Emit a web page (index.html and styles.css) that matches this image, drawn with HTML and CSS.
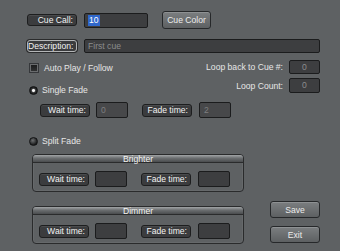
FILE: index.html
```html
<!DOCTYPE html>
<html lang="en">
    <head>
        <title>Cue Editor</title>
        <meta charset="utf-8">
        <meta name="viewport" content="width=device-width, initial-scale=1.0">
        <link rel="stylesheet" href="styles.css">
    </head>
    <body>
        <main id="cue-editor">
            <div class="row row-top">
                <div class="tag">Cue Call:</div>
                <div class="field field-call"><span class="selected">10</span></div>
                <button class="btn btn-color">Cue Color</button>
            </div>
            <div class="row row-desc">
                <div class="tag tag-focus">Description:</div>
                <div class="field field-desc">First cue</div>
            </div>
            <div class="options">
                <div class="options-left">
                    <div class="check-row"><span class="checkbox"></span>Auto Play / Follow</div>
                    <div class="radio-row"><span class="radio checked"></span>Single Fade</div>
                </div>
                <div class="options-right">
                    <div class="loop-row">Loop back to Cue #:<div class="field field-small">0</div></div>
                    <div class="loop-row loop-count">Loop Count:<div class="field field-small">0</div></div>
                </div>
            </div>
            <div class="times times-single">
                <div class="tag">Wait time:</div>
                <div class="field field-time disabled">0</div>
                <div class="tag tag-fade">Fade time:</div>
                <div class="field field-time disabled">2</div>
            </div>
            <div class="radio-row split-row"><span class="radio"></span>Split Fade</div>
            <div class="bottom">
                <div class="groups">
                    <div class="group">
                        <div class="group-title">Brighter</div>
                        <div class="times">
                            <div class="tag">Wait time:</div>
                            <div class="field field-time"></div>
                            <div class="tag tag-fade">Fade time:</div>
                            <div class="field field-time"></div>
                        </div>
                    </div>
                    <div class="group group-dimmer">
                        <div class="group-title">Dimmer</div>
                        <div class="times">
                            <div class="tag">Wait time:</div>
                            <div class="field field-time"></div>
                            <div class="tag tag-fade">Fade time:</div>
                            <div class="field field-time"></div>
                        </div>
                    </div>
                </div>
                <div class="actions">
                    <button class="btn btn-action">Save</button>
                    <button class="btn btn-action">Exit</button>
                </div>
            </div>
        </main>
    </body>
</html>
```

FILE: styles.css
```css
* {
    margin: 0;
    padding: 0;
    box-sizing: border-box;
}
body {
    width: 340px;
    height: 251px;
    overflow: hidden;
    background-color: #5e6163;
    font-family: "Liberation Sans", Arial, sans-serif;
    font-size: 8.6px;
    color: #e6e6e6;
}
main {
    padding: 11px 20px 0 27px;
}
.row {
    display: flex;
    align-items: center;
}
.row-top {
    height: 18px;
}
.row-desc {
    height: 14px;
    margin-top: 10px;
}
.tag {
    flex: none;
    width: 50px;
    height: 12px;
    line-height: 10px;
    padding-right: 3px;
    text-align: right;
    color: #f2f2f2;
    background-color: #3b3c3e;
    border: 1px solid #1d1e1f;
    border-radius: 3px;
    box-shadow: inset 0 1px 0 #4a4b4d;
}
.tag-focus {
    border-color: #b4b6b7;
    box-shadow: 0 0 0 1px #2a2b2c;
}
.field {
    flex: none;
    height: 15px;
    line-height: 13px;
    padding-left: 3px;
    color: #8c8d8e;
    background-color: #3d3e40;
    border: 1px solid #1b1c1d;
    border-radius: 2px;
}
.field-call {
    width: 64px;
    margin-left: 7px;
}
.selected {
    display: inline-block;
    line-height: 11px;
    padding: 0 1px;
    color: #ffffff;
    background-color: #2f67cb;
}
.field-desc {
    flex: 1;
    height: 14px;
    line-height: 12px;
    margin-left: 7px;
}
.btn {
    height: 18px;
    font: inherit;
    color: #ececec;
    background: linear-gradient(#7b7e80, #5d6062);
    border: 1px solid #26282a;
    border-radius: 3px;
    box-shadow: inset 0 1px 0 #8e9193;
}
.btn-color {
    width: 49px;
    margin-left: 14px;
}

/* auto play + loops */
.options {
    display: flex;
    justify-content: space-between;
    margin-top: 7px;
}
.check-row,
.radio-row {
    display: flex;
    align-items: center;
    height: 14px;
}
.check-row {
    margin-top: 1px;
}
.options-left .radio-row {
    margin-top: 8px;
}
.checkbox {
    width: 8px;
    height: 8px;
    margin: 0 6px 0 3px;
    background: linear-gradient(#1c1d1e, #303132);
    border: 1px solid #6a6c6e;
    box-shadow: 0 0 0 1px #35373a;
}
.radio {
    width: 9px;
    height: 9px;
    margin: 0 4px 0 2px;
    border-radius: 50%;
    background: radial-gradient(circle at 40% 35%, #6d6f71, #1b1c1d 70%);
    border: 1px solid #121314;
}
.radio.checked {
    background: radial-gradient(circle, #f2f2f2 0 22%, #3a3b3c 42%, #141515 75%);
}
.options-right {
    display: flex;
    flex-direction: column;
    align-items: flex-end;
}
.loop-row {
    display: flex;
    align-items: center;
}
.loop-count {
    margin-top: 4px;
}
.field-small {
    width: 31px;
    height: 14px;
    line-height: 12px;
    margin-left: 6px;
    padding-left: 0;
    text-align: center;
}
.loop-count .field-small {
    height: 15px;
    line-height: 13px;
}

/* wait / fade rows */
.times {
    display: flex;
    align-items: center;
    height: 16px;
}
.times-single {
    margin: 5px 0 0 13px;
}
.times .tag {
    height: 13px;
    line-height: 11px;
}
.tag-fade {
    margin-left: 14px;
}
.field-time {
    width: 32px;
    height: 16px;
    line-height: 14px;
    margin-left: 6px;
    padding-left: 4px;
}
.field-time + .tag-fade + .field-time {
    margin-left: 7px;
}
.disabled {
    background-color: #47484a;
    color: #7e7f80;
}
.split-row {
    margin-top: 16px;
}

/* split fade groups */
.bottom {
    display: flex;
    margin-top: 6px;
}
.groups {
    width: 219px;
    margin-left: 5px;
}
.group {
    height: 38px;
    border: 1px solid #2a2b2c;
    border-radius: 4px;
    overflow: hidden;
    box-shadow: inset 0 0 0 1px #66696b;
}
.group-dimmer {
    margin-top: 14px;
}
.group-title {
    height: 8px;
    line-height: 9px;
    text-align: center;
    color: #f4f4f4;
    background: linear-gradient(#a2a5a7, #6b6e70 45%, #4a4c4e);
    border-bottom: 1px solid #2a2b2c;
}
.group .times {
    margin: 8px 0 0 6px;
}
.actions {
    display: flex;
    flex-direction: column;
    align-self: flex-end;
    gap: 8px;
    margin: 0 0 1px 26px;
}
.btn-action {
    width: 50px;
    height: 17px;
}
```
